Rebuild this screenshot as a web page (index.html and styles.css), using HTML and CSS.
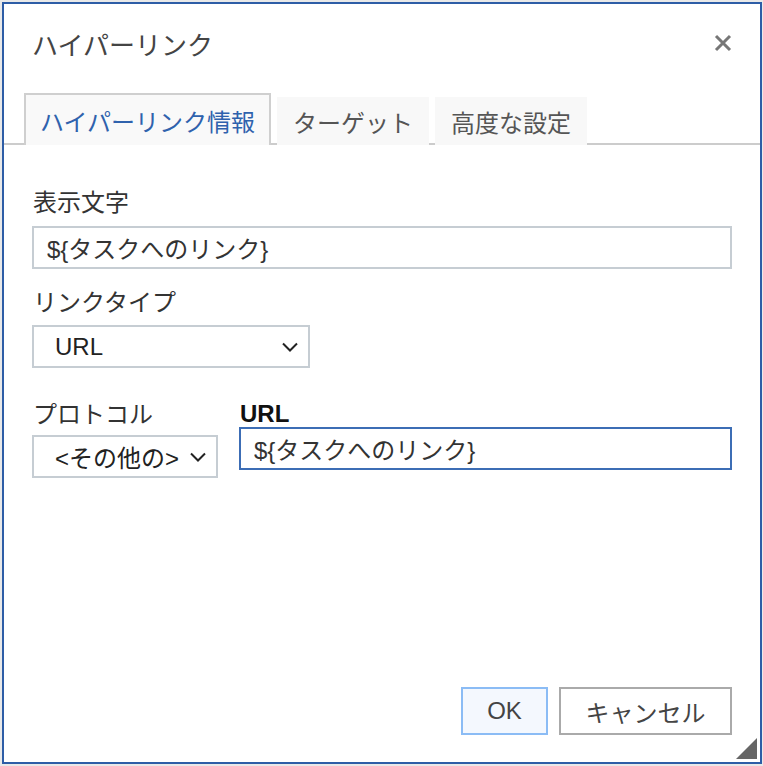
FILE: index.html
```html
<!DOCTYPE html>
<html lang="ja">

<head>
    <meta charset="UTF-8">
    <meta name="viewport" content="width=device-width, initial-scale=1.0">
    <title>ハイパーリンク</title>
    <link rel="stylesheet" href="styles.css">
</head>

<body>
    <div class="dialog">
        <div class="dialog-header">
            <div class="dialog-title">ハイパーリンク</div>
            <div class="dialog-close">
                <svg width="18" height="18" viewBox="0 0 18 18">
                    <path d="M2 2 L16 16 M16 2 L2 16" stroke="#777" stroke-width="3" fill="none" />
                </svg>
            </div>
        </div>

        <div class="tabs">
            <div class="tab tab--active">ハイパーリンク情報</div>
            <div class="tab">ターゲット</div>
            <div class="tab">高度な設定</div>
        </div>

        <div class="form">
            <div class="field-label">表示文字</div>
            <input class="text-input" type="text" value="${タスクへのリンク}" spellcheck="false">

            <div class="field-label field-label--type">リンクタイプ</div>
            <div class="select select--type">
                <span>URL</span>
                <svg class="chevron" width="16" height="10" viewBox="0 0 16 10">
                    <path d="M1 1.5 L8 8.5 L15 1.5" stroke="#222" stroke-width="2" fill="none" />
                </svg>
            </div>

            <div class="form-row">
                <div class="form-col">
                    <div class="field-label field-label--protocol">プロトコル</div>
                    <div class="select select--protocol">
                        <span>&lt;その他の&gt;</span>
                        <svg class="chevron" width="16" height="10" viewBox="0 0 16 10">
                            <path d="M1 1.5 L8 8.5 L15 1.5" stroke="#222" stroke-width="2" fill="none" />
                        </svg>
                    </div>
                </div>
                <div class="form-col form-col--grow">
                    <div class="field-label field-label--bold">URL</div>
                    <input class="text-input text-input--focus" type="text" value="${タスクへのリンク}" spellcheck="false">
                </div>
            </div>
        </div>

        <div class="dialog-footer">
            <div class="btn btn--ok">OK</div>
            <div class="btn">キャンセル</div>
        </div>

        <svg class="resize-grip" width="21" height="21" viewBox="0 0 21 21">
            <polygon points="0,21 21,21 21,0" fill="#666" />
        </svg>
    </div>
</body>

</html>
```

FILE: styles.css
```css
html {
    background-color: #e9e9e9;
}

body {
    margin: 0;
    font-family: "Liberation Sans", "Noto Sans CJK JP", sans-serif;
    font-size: 24px;
    color: #333;
}

.dialog {
    position: relative;
    box-sizing: border-box;
    width: 760px;
    height: 762px;
    margin: 2px 0 0 2px;
    border: 2px solid #2e5da6;
    background: #fff;
    display: flex;
    flex-direction: column;
}

.dialog-header {
    height: 78px;
    padding: 0 28px 0 28px;
    display: flex;
    align-items: center;
    justify-content: space-between;
}

.dialog-title {
    font-size: 26px;
    color: #444;
}

.dialog-close {
    display: flex;
}

.tabs {
    display: flex;
    align-items: flex-end;
    gap: 6px;
    padding: 11px 0 0 20px;
    border-bottom: 2px solid #ccc;
}

.tab {
    box-sizing: border-box;
    height: 48px;
    margin-bottom: -2px;
    padding: 0 16px;
    display: flex;
    align-items: center;
    background: #f8f8f8;
    color: #555;
}

.tab--active {
    height: 52px;
    padding: 0 14px;
    border: 2px solid #cfcfcf;
    border-bottom: none;
    background: #f9f9f9;
    color: #2f62ad;
}

.form {
    flex-grow: 1;
    padding: 42px 28px 0 28px;
}

.field-label {
    line-height: 32px;
    padding-left: 1px;
}

.field-label--type {
    margin-top: 18px;
}

.field-label--protocol {
    margin-top: 2px;
}

.field-label--bold {
    font-weight: bold;
    color: #111;
    line-height: 24px;
    padding-top: 5px;
}

.text-input {
    display: block;
    box-sizing: border-box;
    width: 100%;
    height: 43px;
    margin: 7px 0 0;
    padding: 0 13px;
    border: 2px solid #c6cdd3;
    outline: none;
    font-family: inherit;
    font-size: 24px;
    color: #333;
}

.text-input--focus {
    margin-top: 1px;
    border-color: #3c6db5;
}

.select {
    box-sizing: border-box;
    height: 43px;
    padding: 0 10px 0 21px;
    border: 2px solid #c6cdd3;
    display: flex;
    align-items: center;
    justify-content: space-between;
    color: #222;
}

.select--type {
    width: 278px;
    margin-top: 6px;
}

.select--protocol {
    width: 186px;
    margin-top: 4px;
}

.form-row {
    display: flex;
    gap: 21px;
    margin-top: 29px;
}

.form-col--grow {
    flex-grow: 1;
}

.dialog-footer {
    display: flex;
    justify-content: flex-end;
    gap: 11px;
    padding: 0 28px 27px;
}

.btn {
    box-sizing: border-box;
    height: 48px;
    width: 173px;
    border: 2px solid #aaa;
    background: #fff;
    color: #444;
    display: flex;
    align-items: center;
    justify-content: center;
}

.btn--ok {
    width: 87px;
    border-color: #8bbcf5;
    background: #f4f8fe;
}

.resize-grip {
    position: absolute;
    right: 3px;
    bottom: 3px;
}
```
